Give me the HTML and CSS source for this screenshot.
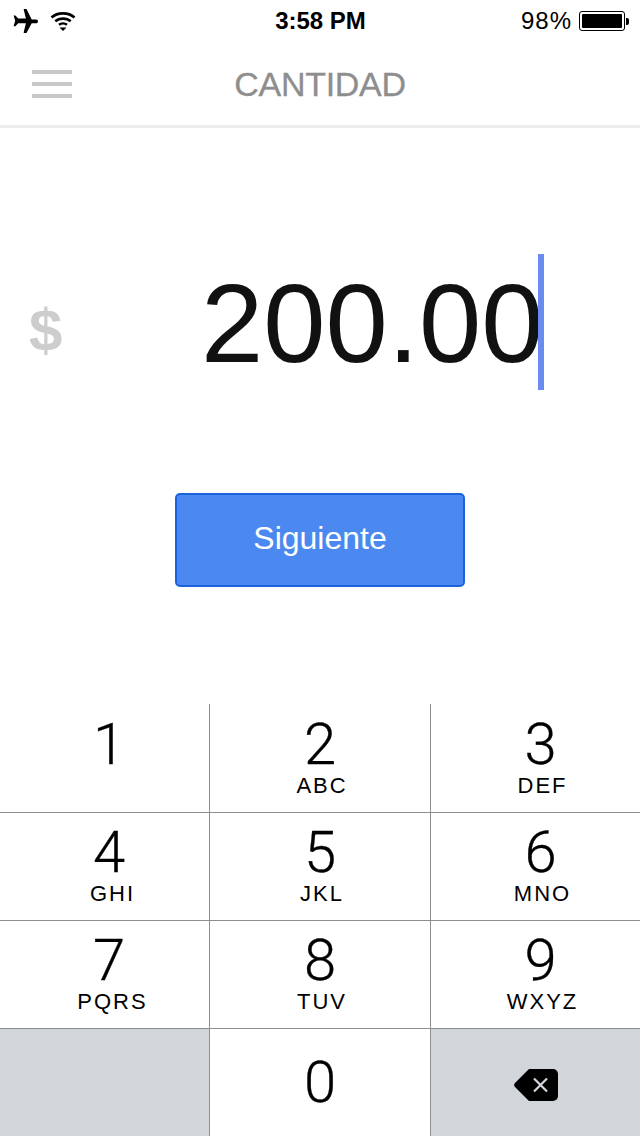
FILE: index.html
```html
<!DOCTYPE html>
<html lang="es">
<head>
<meta charset="utf-8">
<title>Cantidad</title>
<link rel="stylesheet" href="styles.css">
</head>
<body>
<main class="screen">
  <header class="status">
    <div class="status-left">
      <svg class="icon-plane" viewBox="0 0 26 24" width="26" height="24"><path d="M14.500 0h-2.600l-.2.600 2.200 9H6.200L3.400 6.600H1.600l1.600 5.200-1.600 5.400h1.800l2.800-3h7.700l-2.200 9 .2.800h2.600l5.200-9.800H24c1 0 2-.8 2-1.800s-1-1.800-2-1.800h-4.300z" fill="#000"/></svg>
      <svg class="icon-wifi" viewBox="0 0 26 20" width="26" height="20"><path d="M1.500 6.500C7.500 1 18.500 1 24.500 6.500M5.300 10.300C9.500 6.700 16.500 6.700 20.700 10.300" fill="none" stroke="#000" stroke-width="2.600"/><path d="M9 13.800c2.300-1.800 5.700-1.800 8 0" fill="none" stroke="#000" stroke-width="2.600"/><path d="M9.500 16.500h7L13 20z" fill="#000"/></svg>
    </div>
    <div class="status-time">3:58 PM</div>
    <div class="status-right">
      <span class="battery-text">98%</span>
      <span class="battery"><span class="battery-fill"></span></span>
      <span class="battery-cap"></span>
    </div>
  </header>
  <nav class="navbar">
    <div class="menu"><span></span><span></span><span></span></div>
    <h1 class="title">CANTIDAD</h1>
  </nav>
  <section class="amount">
    <span class="currency">$</span>
    <div class="value"><span class="value-text">200.00</span><span class="caret"></span></div>
  </section>
  <div class="action"><button class="next">Siguiente</button></div>
  <section class="keypad">
    <div class="key"><span class="digit">1</span></div>
    <div class="key"><span class="digit">2</span><span class="letters">ABC</span></div>
    <div class="key"><span class="digit">3</span><span class="letters">DEF</span></div>
    <div class="key"><span class="digit">4</span><span class="letters">GHI</span></div>
    <div class="key"><span class="digit">5</span><span class="letters">JKL</span></div>
    <div class="key"><span class="digit">6</span><span class="letters">MNO</span></div>
    <div class="key"><span class="digit">7</span><span class="letters">PQRS</span></div>
    <div class="key"><span class="digit">8</span><span class="letters">TUV</span></div>
    <div class="key"><span class="digit">9</span><span class="letters">WXYZ</span></div>
    <div class="key key-dark"></div>
    <div class="key key-zero"><span class="digit">0</span></div>
    <div class="key key-dark key-back">
      <svg viewBox="0 0 44 32" width="44" height="32"><path d="M15 0h24a5 5 0 0 1 5 5v22a5 5 0 0 1-5 5H15L1 18a3 3 0 0 1 0-4z" fill="#000"/><path d="M20 9.500l13 13M33 9.500l-13 13" stroke="#d2d5da" stroke-width="2.200" fill="none"/></svg>
    </div>
  </section>
</main>
</body>
</html>
```
FILE: styles.css
```css
* { box-sizing: border-box; }
html, body { margin: 0; padding: 0; background: #fff; }
body { font-family: "Liberation Sans", Arial, sans-serif; color: #000; }
.screen { width: 640px; height: 1136px; overflow: hidden; display: flex; flex-direction: column; }

.status { height: 40px; display: grid; grid-template-columns: 1fr auto 1fr; align-items: center; padding: 2px 11px 0 12px; }
.status-left { display: flex; align-items: center; gap: 12px; }
.icon-plane { display: block; }
.icon-wifi { display: block; }
.status-time { font-size: 24px; font-weight: 700; }
.status-right { display: flex; align-items: center; justify-content: flex-end; }
.battery-text { font-size: 24px; letter-spacing: 1px; margin-right: 7px; }
.battery { width: 46px; height: 20px; border: 1px solid #000; border-radius: 3px; padding: 2px; display: block; }
.battery-fill { display: block; height: 100%; width: 100%; background: #000; border-radius: 1px; }
.battery-cap { width: 3px; height: 7px; background: #000; border-radius: 0 2px 2px 0; margin-left: 1px; }

.navbar { height: 88px; display: flex; align-items: center; justify-content: center; border-bottom: 3px solid #ececec; padding-top: 3px; position: relative; }
.menu { position: absolute; left: 32px; top: 30px; width: 40px; display: flex; flex-direction: column; gap: 8px; }
.menu span { display: block; height: 4px; background: #c8c8c8; }
.title { margin: 0; font-size: 34px; font-weight: 400; color: #8e8e8e; letter-spacing: -0.3px; -webkit-text-stroke: 0.3px #8e8e8e; }

.amount { height: 276px; display: flex; align-items: flex-start; padding: 126px 0 0 29px; }
.currency { font-size: 60px; font-weight: 700; color: #cdcdcd; line-height: 70px; margin-top: 42px; width: 172px; }
.value { display: flex; align-items: flex-start; }
.value-text { font-size: 112px; line-height: 140px; color: #111; }
.caret { width: 6px; height: 136px; background: #6a8cf0; margin-left: -6px; }

.action { height: 300px; display: flex; justify-content: center; align-items: flex-start; padding-top: 89px; }
.next { width: 290px; height: 94px; background: #4b89f0; border: 2px solid #1c62dc; border-radius: 5px; color: #fff; font-family: inherit; font-size: 32px; padding: 0 0 4px; }

.keypad { flex: 1; display: grid; grid-template-columns: 210px 221px 209px; grid-template-rows: 109px 108px 108px 107px; }
.key { display: flex; flex-direction: column; align-items: center; border-bottom: 1px solid #8e8e8e; border-right: 1px solid #8e8e8e; padding-top: 9px; }
.key:nth-child(-n+3) { padding-top: 10px; }
.key:nth-child(3n+1) { padding-left: 9px; }
.key:nth-child(3n) { border-right: 0; padding-left: 10px; }
.key:nth-child(n+10) { border-bottom: 0; }
.key-dark { background: #d2d5da; }
.key-zero { padding-top: 23px; }
.key.key-back { align-items: center; justify-content: center; padding: 5px 0 0 0; }
.digit { font-family: Roboto, "Liberation Sans", sans-serif; font-weight: 300; font-size: 58px; line-height: 60px; -webkit-text-stroke: 0.3px #000; }
.letters { font-size: 22px; letter-spacing: 2px; line-height: 24px; margin-left: 4px; }
.key:nth-child(3n+1) .letters { margin-left: 7px; }
```
